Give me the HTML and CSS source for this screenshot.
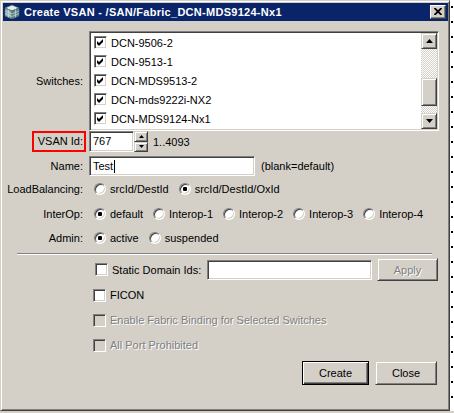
FILE: index.html
```html
<!DOCTYPE html>
<html>
<head>
<meta charset="utf-8">
<title>Create VSAN</title>
<link rel="stylesheet" href="styles.css">
</head>
<body>
<div class="screen">
  <div class="window">
    <div class="titlebar">
      <svg class="appicon" width="16" height="16" viewBox="0 0 16 16">
        <polygon points="8,1 15,4 8,7 1,4" fill="#e2ecec" stroke="#4c6666" stroke-width="0.7"/>
        <polygon points="1,4 8,7 8,15 1,12" fill="#8fb2b2" stroke="#4c6666" stroke-width="0.7"/>
        <polygon points="8,7 15,4 15,12 8,15" fill="#5f8686" stroke="#4c6666" stroke-width="0.7"/>
        <path d="M1 7 L8 10 L15 7 M1 9.5 L8 12.5 L15 9.5 M4.5 5.5 V13.5 M11.5 5.5 V13.5" stroke="#d9e6e6" stroke-width="0.6" fill="none"/>
      </svg>
      <span class="title">Create VSAN - /SAN/Fabric_DCN-MDS9124-Nx1</span>
      <span class="close">
        <svg width="8" height="7" viewBox="0 0 8 7"><path d="M0.5 0 L7.5 7 M7.5 0 L0.5 7" stroke="#000" stroke-width="1.8"/></svg>
      </span>
    </div>

    <div class="content">
      <div class="row row-switches">
        <div class="label">Switches:</div>
        <div class="listbox sunken">
          <div class="list">
            <div class="item"><span class="cb"><svg class="tick" width="7" height="7" viewBox="0 0 7 7"><polygon points="0,2 2,4 6,0 6,3 2,7 0,5" fill="#000"/></svg></span>DCN-9506-2</div>
            <div class="item"><span class="cb"><svg class="tick" width="7" height="7" viewBox="0 0 7 7"><polygon points="0,2 2,4 6,0 6,3 2,7 0,5" fill="#000"/></svg></span>DCN-9513-1</div>
            <div class="item"><span class="cb"><svg class="tick" width="7" height="7" viewBox="0 0 7 7"><polygon points="0,2 2,4 6,0 6,3 2,7 0,5" fill="#000"/></svg></span>DCN-MDS9513-2</div>
            <div class="item"><span class="cb"><svg class="tick" width="7" height="7" viewBox="0 0 7 7"><polygon points="0,2 2,4 6,0 6,3 2,7 0,5" fill="#000"/></svg></span>DCN-mds9222i-NX2</div>
            <div class="item"><span class="cb"><svg class="tick" width="7" height="7" viewBox="0 0 7 7"><polygon points="0,2 2,4 6,0 6,3 2,7 0,5" fill="#000"/></svg></span>DCN-MDS9124-Nx1</div>
          </div>
          <div class="scrollbar">
            <div class="sb-btn raised"><svg width="7" height="4" viewBox="0 0 7 4"><polygon points="3.5,0 7,4 0,4" fill="#000"/></svg></div>
            <div class="sb-track upper"></div>
            <div class="sb-thumb raised"></div>
            <div class="sb-track lower"></div>
            <div class="sb-btn raised"><svg width="7" height="4" viewBox="0 0 7 4"><polygon points="0,0 7,0 3.5,4" fill="#000"/></svg></div>
          </div>
        </div>
      </div>

      <div class="row row-vsan">
        <div class="label"><span class="highlight">VSAN Id:</span></div>
        <div class="spinner">
          <div class="field sunken spin-field">767</div>
          <div class="spin-btns">
            <div class="spin-btn raised"><svg width="5" height="3" viewBox="0 0 5 3"><polygon points="2.5,0 5,3 0,3" fill="#000"/></svg></div>
            <div class="spin-btn raised"><svg width="5" height="3" viewBox="0 0 5 3"><polygon points="0,0 5,0 2.5,3" fill="#000"/></svg></div>
          </div>
        </div>
        <span class="hint range">1..4093</span>
      </div>

      <div class="row row-name">
        <div class="label">Name:</div>
        <div class="field sunken name-field">Test<span class="caret"></span></div>
        <span class="hint blank">(blank=default)</span>
      </div>

      <div class="row row-radio row-lb">
        <div class="label">LoadBalancing:</div>
        <div class="radios">
          <span class="opt"><span class="radio"></span>srcId/DestId</span>
          <span class="opt"><span class="radio on"></span>srcId/DestId/OxId</span>
        </div>
      </div>

      <div class="row row-radio row-interop">
        <div class="label">InterOp:</div>
        <div class="radios">
          <span class="opt"><span class="radio on"></span>default</span>
          <span class="opt"><span class="radio"></span>Interop-1</span>
          <span class="opt"><span class="radio"></span>Interop-2</span>
          <span class="opt"><span class="radio"></span>Interop-3</span>
          <span class="opt"><span class="radio"></span>Interop-4</span>
        </div>
      </div>

      <div class="row row-radio row-admin">
        <div class="label">Admin:</div>
        <div class="radios">
          <span class="opt"><span class="radio on"></span>active</span>
          <span class="opt"><span class="radio"></span>suspended</span>
        </div>
      </div>

      <div class="separator"></div>

      <div class="row row-static">
        <span class="check static-check"><span class="cb"></span>Static Domain Ids:</span>
        <div class="field sunken static-field"></div>
        <span class="btn raised disabled apply">Apply</span>
      </div>

      <div class="row row-check row-ficon">
        <span class="check"><span class="cb"></span>FICON</span>
      </div>

      <div class="row row-check row-fabric">
        <span class="check disabled"><span class="cb"></span>Enable Fabric Binding for Selected Switches</span>
      </div>

      <div class="row row-check row-allport">
        <span class="check disabled"><span class="cb"></span>All Port Prohibited</span>
      </div>

      <div class="row row-buttons">
        <span class="btn default create">Create</span>
        <span class="btn raised closebtn">Close</span>
      </div>
    </div>
  </div>
  <div class="rstrip"></div>
</div>
<div class="bstrip"></div>
</body>
</html>
```

FILE: styles.css
```css
* { box-sizing: border-box; }

html, body {
  margin: 0;
  padding: 0;
  background: #ffffff;
  font-family: "Liberation Sans", Arial, sans-serif;
  font-size: 11px;
  color: #000;
  overflow: hidden;
}

.screen {
  display: flex;
  width: 454px;
  height: 411px;
}

.window {
  width: 450px;
  height: 411px;
  background: #d4d0c8;
  border: 1px solid;
  border-color: #d4d0c8 #404040 #404040 #d4d0c8;
  box-shadow: inset 1px 1px #ffffff, inset -1px -1px #808080;
  padding: 2px 1px 2px 2px;
  display: flex;
  flex-direction: column;
}

.rstrip {
  width: 4px;
  height: 411px;
  background:
    repeating-linear-gradient(to bottom, #000 0 2px, transparent 2px 15px) 1px 6px / 2px 100% no-repeat,
    #ffffff;
}

.bstrip {
  height: 2px;
  width: 454px;
  background: #d4d0c8;
}

/* ---------- title bar ---------- */
.titlebar {
  height: 18px;
  background: #0a246a;
  display: flex;
  align-items: center;
  padding: 0 2px 0 1px;
}
.appicon { flex: none; margin-right: 4px; }
.title {
  color: #fff;
  font-weight: bold;
  font-size: 11px;
  flex: 1;
  white-space: nowrap;
  letter-spacing: 0.28px;
}
.close {
  width: 16px;
  height: 14px;
  background: #d4d0c8;
  border: 1px solid;
  border-color: #fff #404040 #404040 #fff;
  box-shadow: inset -1px -1px #808080;
  display: flex;
  align-items: center;
  justify-content: center;
  padding: 0 1px 1px 0;
}
.close svg { display: block; }

/* ---------- common widgets ---------- */
.sunken {
  background: #fff;
  border: 1px solid;
  border-color: #808080 #fff #fff #808080;
  box-shadow: inset 1px 1px #404040, inset -1px -1px #d4d0c8;
}
.raised {
  background: #d4d0c8;
  border: 1px solid;
  border-color: #d4d0c8 #404040 #404040 #d4d0c8;
  box-shadow: inset 1px 1px #fff, inset -1px -1px #808080;
}

.content {
  display: flex;
  flex-direction: column;
}

.row {
  display: flex;
  align-items: center;
}

.label {
  width: 86px;
  flex: none;
  text-align: right;
  padding-right: 6px;
  white-space: nowrap;
}

/* ---------- switches list ---------- */
.row-switches { margin-top: 10px; }
.listbox {
  width: 350px;
  height: 100px;
  display: flex;
}
.listbox.sunken { padding: 1px; }
.list { flex: 1; }
.item {
  height: 19px;
  display: flex;
  align-items: center;
  padding-left: 3px;
  white-space: nowrap;
}
.cb {
  width: 13px;
  height: 13px;
  flex: none;
  background: #fff;
  border: 1px solid;
  border-color: #808080 #fff #fff #808080;
  box-shadow: inset 1px 1px #404040, inset -1px -1px #d4d0c8;
  margin-right: 4px;
  display: flex;
  align-items: center;
  justify-content: center;
}
.tick { display: block; }

.scrollbar {
  width: 16px;
  display: flex;
  flex-direction: column;
}
.sb-btn {
  height: 16px;
  display: flex;
  align-items: center;
  justify-content: center;
}
.sb-btn svg { display: block; }
.sb-track {
  background: repeating-conic-gradient(#d4d0c8 0 25%, #ffffff 0 50%) 0 0 / 2px 2px;
}
.sb-track.upper { height: 29px; }
.sb-track.lower { height: 7px; }
.sb-thumb { height: 28px; }

/* ---------- VSAN id ---------- */
.row-vsan { height: 21px; }
.row-vsan .label { padding-right: 3px; }
.highlight {
  display: inline-block;
  width: 54px;
  height: 21px;
  line-height: 17px;
  border: 2px solid #ff0000;
  text-align: right;
  padding-right: 1px;
}
.spinner { display: flex; height: 21px; }
.field {
  height: 20px;
  line-height: 18px;
  padding-left: 3px;
  white-space: nowrap;
}
.spin-field { width: 45px; height: 21px; line-height: 19px; }
.spin-btns {
  width: 14px;
  display: flex;
  flex-direction: column;
}
.spin-btn {
  height: 10px;
  flex: 1;
  display: flex;
  align-items: center;
  justify-content: center;
}
.spin-btn svg { display: block; }
.hint { white-space: nowrap; }
.range { margin-left: 5px; }

/* ---------- name ---------- */
.row-name { margin-top: 4px; height: 20px; }
.name-field { width: 166px; display: flex; align-items: center; }
.caret {
  display: inline-block;
  width: 1px;
  height: 13px;
  background: #000;
  margin-left: 1px;
}
.blank { margin-left: 6px; }

/* ---------- radios ---------- */
.row-radio { height: 21px; }
.row-lb { margin-top: 2px; }
.row-interop { margin-top: 4px; }
.row-admin { margin-top: 3px; }
.radios {
  display: flex;
  align-items: center;
  padding-left: 5px;
}
.opt {
  display: inline-flex;
  align-items: center;
  margin-right: 10px;
  white-space: nowrap;
}
.radio {
  width: 12px;
  height: 12px;
  border-radius: 50%;
  background: #fff;
  border: 1px solid;
  border-color: #808080 #fff #fff #808080;
  box-shadow: inset 1px 1px #404040, inset -1px -1px #d4d0c8;
  margin-right: 4px;
  position: relative;
  flex: none;
}
.radio.on::after {
  content: "";
  position: absolute;
  left: 3px;
  top: 3px;
  width: 4px;
  height: 4px;
  border-radius: 1px;
  background: #000;
}

/* ---------- separator ---------- */
.separator {
  margin: 5px 16px 0 14px;
  height: 2px;
  border-top: 1px solid #808080;
  border-bottom: 1px solid #ffffff;
}

/* ---------- static / checkboxes ---------- */
.row-static { margin-top: 3px; height: 23px; }
.check {
  display: inline-flex;
  align-items: center;
  white-space: nowrap;
  margin-left: 90px;
}
.static-check {
  margin-left: 92px;
  width: 112px;
}
.static-field { width: 165px; height: 20px; }
.btn {
  display: inline-flex;
  align-items: center;
  justify-content: center;
  height: 23px;
  background: #d4d0c8;
  white-space: nowrap;
}
.apply {
  width: 61px;
  margin-left: 5px;
  height: 23px;
}
.disabled { color: #808080; text-shadow: 1px 1px #fff; }
.check.disabled .cb { background: #d4d0c8; }

.row-check { height: 20px; }
.row-ficon { margin-top: 4px; }
.row-fabric { margin-top: 5px; }
.row-allport { margin-top: 5px; }

/* ---------- buttons ---------- */
.row-buttons {
  margin-top: 6px;
  justify-content: flex-end;
  padding-right: 11px;
  height: 24px;
}
.btn.default {
  border: 1px solid #000;
  box-shadow: inset 1px 1px #fff, inset -1px -1px #404040, inset -2px -2px #808080;
}
.create { width: 67px; height: 24px; margin-right: 6px; }
.closebtn { width: 62px; height: 24px; }
```
